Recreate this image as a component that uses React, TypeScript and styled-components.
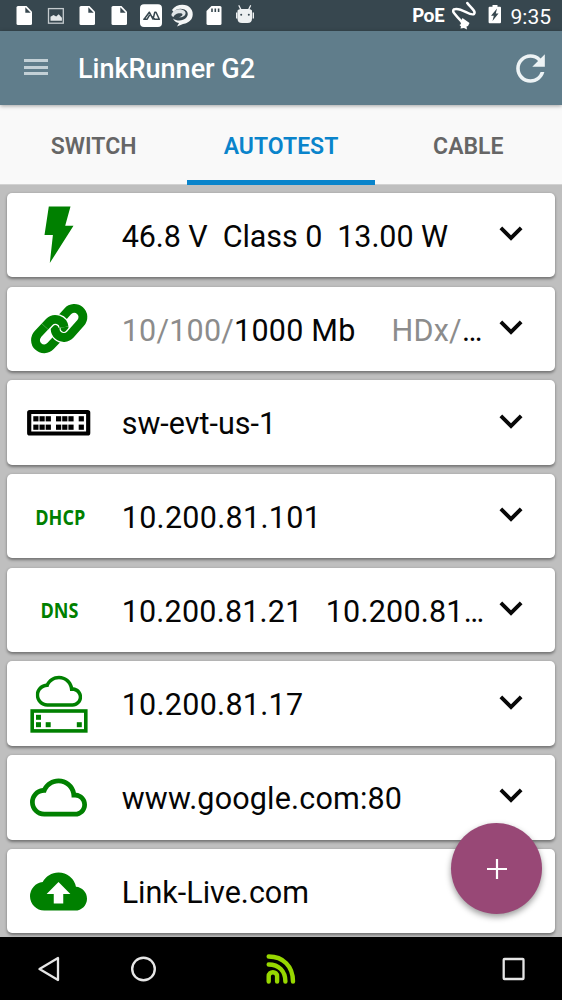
import React from "react";
import styled, { createGlobalStyle } from "styled-components";
import { MdBackup, MdCloudQueue, MdExpandMore, MdRefresh } from "react-icons/md";

const GlobalStyle = createGlobalStyle`
  *, *::before, *::after { box-sizing: border-box; }
  body { margin: 0; background: #000; font-family: Roboto, "Liberation Sans", sans-serif; }
  svg { display: block; flex: none; }
`;

const Screen = styled.div`
  position: relative;
  width: 562px;
  height: 1000px;
  display: flex;
  flex-direction: column;
  overflow: hidden;
  background: #bfbfbf;
`;

const StatusBar = styled.header`
  height: 31px;
  flex: none;
  display: flex;
  justify-content: space-between;
  background: #37474f;
  color: #fff;
`;

const Notifications = styled.div`
  display: flex;
  padding-left: 8.2px;
`;

const NotificationSlot = styled.div`
  width: 31.65px;
  display: flex;
  justify-content: center;
`;

const SystemStatus = styled.div`
  display: flex;
  align-items: flex-start;
  padding-right: 11px;
`;

const PoeLabel = styled.span`
  font: 900 19px/20px Lato, sans-serif;
  padding-top: 5px;
  margin-right: 5px;
`;

const BatterySlot = styled.span`
  margin-left: 11.5px;
`;

const Clock = styled.span`
  font-size: 21px;
  line-height: 24px;
  padding-top: 5px;
  margin-left: 9px;
`;

const AppBar = styled.div`
  position: relative;
  z-index: 1;
  height: 74px;
  flex: none;
  display: flex;
  align-items: center;
  padding: 0 10px 0 24px;
  background: #607d8b;
  box-shadow: 0 1px 4px rgba(0, 0, 0, 0.35);
  color: #fff;
`;

const MenuButton = styled.div`
  width: 24px;
  display: flex;
  flex-direction: column;
  gap: 3.3px;
  margin-top: -2px;
`;

const MenuLine = styled.span`
  height: 3px;
  background: #c3d0d6;
`;

const Title = styled.h1`
  flex: 1;
  margin: 2px 0 0 30px;
  font-size: 27px;
  line-height: 32px;
  font-weight: 500;
`;

const Tabs = styled.nav`
  height: 80px;
  flex: none;
  display: grid;
  grid-template-columns: repeat(3, 1fr);
  background: #f9f9f9;
  border-bottom: 1px solid #d2d2d2;
`;

const Tab = styled.div<{ $active?: boolean }>`
  height: 80px;
  display: flex;
  align-items: center;
  justify-content: center;
  padding-top: 8px;
  border-bottom: 5px solid ${(p) => (p.$active ? "#0a84cb" : "transparent")};
  color: ${(p) => (p.$active ? "#0a84cb" : "#666")};
  font-size: 23px;
  font-weight: 600;
`;

const CardList = styled.main`
  flex: 1;
  min-height: 0;
  display: flex;
  flex-direction: column;
  gap: 9.3px;
  padding: 8px 7px 0;
`;

const Card = styled.section`
  height: 84.4px;
  flex: none;
  display: flex;
  align-items: center;
  padding: 0 21px 0 19.5px;
  border-radius: 5px;
  background: #fff;
  box-shadow: 0 1.5px 3px rgba(0, 0, 0, 0.4);
`;

const IconCell = styled.div`
  width: 64px;
  height: 64px;
  flex: none;
  display: flex;
  align-items: center;
  justify-content: center;
  color: #008000;
`;

const Protocol = styled.span`
  font: 700 20.5px/24px "Open Sans", "Noto Sans", sans-serif;
  padding: 1px 0 0 3px;
  transform: scaleX(0.88);
`;

const Value = styled.div<{ $tracking: number }>`
  flex: 1;
  padding: 3.5px 0 0 31.2px;
  color: #050505;
  font-size: 30.5px;
  line-height: 36px;
  letter-spacing: ${(p) => p.$tracking}px;
  white-space: pre;
`;

const Muted = styled.span`
  color: #8c8c8c;
`;

const Duplex = styled.span`
  margin-left: 36px;
`;

const Chevron = styled(MdExpandMore)`
  width: 46px;
  height: 46px;
  margin: -4px 0 0 -6px;
  color: #080808;
`;

const AddButton = styled.button`
  position: absolute;
  left: 451px;
  top: 823px;
  width: 91px;
  height: 91px;
  display: grid;
  place-items: center;
  padding: 0 0 0 1px;
  border: 0;
  border-radius: 50%;
  background: #984876;
  box-shadow: 0 3px 6px rgba(0, 0, 0, 0.4);
`;

const NavBar = styled.footer`
  height: 63px;
  flex: none;
  display: flex;
  align-items: center;
  background: #000;
`;

const NavItem = styled.div<{ $width: number }>`
  width: ${(p) => p.$width}px;
  display: flex;
  justify-content: center;
`;

const FileIcon = () => (
  <svg width="24" height="31" viewBox="0 0 24 31">
    <path fill="#fff" d="M6 6h8.500l5.500 5.700V23.500q0 1.500-1.500 1.500H6q-1.500 0-1.500-1.500v-16Q4.500 6 6 6z" />
    <path fill="#37474f" d="M13.300 7.300v5.500h5.400z" />
  </svg>
);

const ImageIcon = () => (
  <svg width="24" height="31" viewBox="0 0 24 31">
    <rect x="4.500" y="8.600" width="14.800" height="14.600" fill="none" stroke="#c5cbce" strokeWidth="1.300" />
    <path fill="#e4e8e9" d="M6.500 20.700v-4l3-1.800 2.700 1.700 2.500-2.300 3.200 3.400v3z" />
  </svg>
);

const PeaksIcon = () => (
  <svg width="24" height="31" viewBox="0 0 24 31">
    <rect x="1" y="4.300" width="22" height="22.700" rx="4" fill="#fff" />
    <path
      d="M4.200 19.300H8l2.700-4.500M5.500 18.800l4.800-6.600 3.700 7 1.800-7h1.200l3.300 7h-4.800l-1.700-3"
      fill="none"
      stroke="#37474f"
      strokeWidth="1.500"
      strokeLinejoin="round"
    />
  </svg>
);

const SwirlIcon = () => (
  <svg width="24" height="31" viewBox="0 0 24 31">
    <path
      fill="#f4f6f6"
      d="M2 10C5 5 12 3.500 17 5.500s7 8 5 12.500c-2 4-6 5.500-9 6l-6 2.500 2-3.500c-3-.5-5-2-6-4.500 4 3 10 2.500 13-.5 3-3 2-7-1.500-8.500C10 7.800 6 9 3.500 12z"
    />
    <path
      fill="#dfe4e6"
      d="M1.500 14c2-4 6-5.500 10-4.500 3 .8 4.500 2.500 4 4.500-.7 2.700-4 3.500-7 3.300 2-.4 4-1.300 4-2.800 0-1.200-2-1.600-4-1.200-2.500.5-4.500 2-5 3.700-1.500-.5-2.300-1.500-2-3z"
    />
  </svg>
);

const SdCardIcon = () => (
  <svg width="24" height="31" viewBox="0 0 24 31">
    <path fill="#fff" d="M9.500 6H18q1.500 0 1.500 1.500v16Q19.500 25 18 25H6q-1.500 0-1.500-1.500V11z" />
    <path stroke="#37474f" strokeWidth="1.600" d="M10 8.500v3.500M13.300 8.500v3.500M16.600 8.500v3.500" />
  </svg>
);

const RobotIcon = () => (
  <svg width="24" height="31" viewBox="0 0 24 31">
    <path stroke="#edf0f1" strokeWidth="1.300" strokeLinecap="round" d="M6 5.800l2 4M17.500 5.800l-2 4" />
    <path fill="#edf0f1" d="M4.500 10.500q1-1.500 3-1.500h8.500q2 0 3 1.500v8q0 4.500-4.500 4.500h-5.500q-4.500 0-4.500-4.500z" />
    <path stroke="#edf0f1" strokeWidth="1.400" d="M3.700 12.500v6M20.300 12.500v6" />
    <circle cx="8.200" cy="14.800" r="1" fill="#37474f" />
    <circle cx="15.800" cy="14.800" r="1" fill="#37474f" />
  </svg>
);

const CableIcon = () => (
  <svg width="26" height="31" viewBox="0 0 26 31">
    <path
      d="M17.300 3C20 7 26.500 11 24 14 20.500 17 11 6.500 4 9.300 1 12 7 16 11 21"
      fill="none"
      stroke="#fff"
      strokeWidth="2.500"
      strokeLinecap="round"
    />
    <path fill="#fff" d="M12.500 18l7 5-1.500 3-1.500.5.500 3-3-1.500-3.500.5.500-2-1.500-1.500 1.500-1-.5-2z" />
  </svg>
);

const BatteryIcon = () => (
  <svg width="14" height="31" viewBox="0 0 14 31">
    <path fill="#fff" d="M4.500 5h5v1.800H12q1 0 1 1V22q0 1.300-1 1.300H1.600Q.6 23.300.6 22V7.800q0-1 1-1h2.900z" />
    <path fill="#37474f" d="M9 8.500L3 15.700h2.800L4.500 21l6-7.500H7.800z" />
  </svg>
);

const BoltIcon = () => (
  <svg width="64" height="64" viewBox="0 0 64 64">
    <path fill="currentColor" d="M21.800 3.500H43.500L38.200 22.800h8.300L22.800 60.100l3.100-28H17.500z" />
  </svg>
);

/* Two interlocked chain links; the white strokes leave a gap where one passes over the other. */
const LOWER_LINK = "M10.900 37.100L22.200 25.100A8.700 8.700 0 0 1 34.800 37.100L23.500 49.100A8.700 8.700 0 0 1 10.900 37.100z";
const UPPER_LINK = "M30.300 26L40.700 14.300A8.700 8.700 0 0 1 53.700 25.900L43.300 37.600A8.700 8.700 0 0 1 30.300 26z";
const OVERLAP = "M18 29.600L22.200 25.100A8.700 8.700 0 0 1 37.100 30.100";

const ChainIcon = () => (
  <svg width="64" height="64" viewBox="0 0 64 64" fill="none">
    <path d={LOWER_LINK} stroke="currentColor" strokeWidth="8.800" />
    <path d={UPPER_LINK} stroke="#fff" strokeWidth="11.400" />
    <path d={UPPER_LINK} stroke="currentColor" strokeWidth="8.800" />
    <path d={OVERLAP} stroke="#fff" strokeWidth="11.400" />
    <path d={OVERLAP} stroke="currentColor" strokeWidth="8.800" />
  </svg>
);

const PORT_X = [6.800, 13, 19.200, 29.500, 35.700, 41.900, 52.200];

const SwitchIcon = () => (
  <svg width="64" height="64" viewBox="0.5 0.3 64 64">
    <rect x="2.700" y="21.300" width="59" height="21.500" rx=".5" fill="none" stroke="#000" strokeWidth="4.200" />
    {[25.500, 33.900].map((y) =>
      PORT_X.map((x) => <rect key={`${x}-${y}`} x={x} y={y} width="5.200" height="5.200" fill="#000" />)
    )}
  </svg>
);

const ServerCloudIcon = () => (
  <svg width="64" height="64" viewBox="0 0 64 64">
    <svg x="8.700" y="-4.100" width="46.500" height="46.500" viewBox="0 0 24 24">
      <path
        fill="currentColor"
        fillRule="evenodd"
        d="M19.350 10.040C18.670 6.590 15.640 4 12 4 9.110 4 6.600 5.640 5.350 8.040 2.340 8.360 0 10.910 0 14c0 3.310 2.690 6 6 6h13c2.760 0 5-2.240 5-5 0-2.640-2.050-4.780-4.650-4.960zM19 18.200H6c-2.300 0-4.200-1.900-4.200-4.200s1.900-4.200 4.200-4.200h.6C7.300 7.400 9.400 5.800 12 5.800c3.100 0 5.700 2.500 5.700 5.700v.4H19c1.700 0 3.200 1.400 3.200 3.100S20.700 18.200 19 18.200z"
      />
    </svg>
    <rect x="5.200" y="39" width="53.600" height="19.900" fill="none" stroke="currentColor" strokeWidth="3.600" />
    <g fill="currentColor">
      <rect x="9" y="42.800" width="5" height="5" />
      <rect x="9" y="50.200" width="5" height="5" />
      <rect x="18.700" y="50.200" width="5" height="5" />
      <rect x="49.800" y="50.200" width="5" height="5" />
    </g>
  </svg>
);

const BackIcon = () => (
  <svg width="24" height="28" viewBox="0 0 24 28">
    <path d="M21 3v22L2.500 14z" fill="none" stroke="#e6e6e6" strokeWidth="2.300" strokeLinejoin="round" />
  </svg>
);

const HomeIcon = () => (
  <svg width="28" height="28" viewBox="0 0 28 28">
    <circle cx="13.500" cy="14" r="11.300" fill="none" stroke="#e6e6e6" strokeWidth="2.400" />
  </svg>
);

const SignalIcon = () => (
  <svg width="30" height="30" viewBox="0 0 30 30">
    <path
      d="M2.700 2.500C17 2.500 27 12 27 27.500M2.700 10.500c10 0 16.700 6.500 16.700 17M2.700 27.500V22.300c0-5.500 8.400-5.500 8.400 0v5.200"
      fill="none"
      stroke="#97d700"
      strokeWidth="4.400"
      strokeLinecap="round"
    />
  </svg>
);

const RecentsIcon = () => (
  <svg width="26" height="26" viewBox="0 0 26 26">
    <rect x="2.700" y="3" width="19.800" height="20" rx=".8" fill="none" stroke="#e6e6e6" strokeWidth="2.300" />
  </svg>
);

const NOTIFICATIONS = [FileIcon, ImageIcon, FileIcon, FileIcon, PeaksIcon, SwirlIcon, SdCardIcon, RobotIcon];

type Result = {
  id: string;
  icon: React.ReactNode;
  value: React.ReactNode;
  tracking: number;
  expandable: boolean;
};

const RESULTS: Result[] = [
  { id: "poe", icon: <BoltIcon />, value: "46.8 V  Class 0  13.00 W", tracking: -0.07, expandable: true },
  {
    id: "link",
    icon: <ChainIcon />,
    value: (
      <>
        <Muted>10/100/</Muted>1000 Mb
        <Duplex>
          <Muted>HDx/</Muted>…
        </Duplex>
      </>
    ),
    tracking: 0.22,
    expandable: true,
  },
  { id: "switch", icon: <SwitchIcon />, value: "sw-evt-us-1", tracking: 0, expandable: true },
  { id: "dhcp", icon: <Protocol>DHCP</Protocol>, value: "10.200.81.101", tracking: 0.3, expandable: true },
  { id: "dns", icon: <Protocol>DNS</Protocol>, value: "10.200.81.21   10.200.81…", tracking: 0.2, expandable: true },
  { id: "gateway", icon: <ServerCloudIcon />, value: "10.200.81.17", tracking: 0.28, expandable: true },
  { id: "google", icon: <MdCloudQueue size={57} />, value: "www.google.com:80", tracking: 0.18, expandable: true },
  { id: "linklive", icon: <MdBackup size={57} />, value: "Link-Live.com", tracking: 0, expandable: false },
];

export default function App() {
  return (
    <Screen>
      <GlobalStyle />
      <StatusBar>
        <Notifications>
          {NOTIFICATIONS.map((Icon, i) => (
            <NotificationSlot key={i}>
              <Icon />
            </NotificationSlot>
          ))}
        </Notifications>
        <SystemStatus>
          <PoeLabel>PoE</PoeLabel>
          <CableIcon />
          <BatterySlot>
            <BatteryIcon />
          </BatterySlot>
          <Clock>9:35</Clock>
        </SystemStatus>
      </StatusBar>
      <AppBar>
        <MenuButton>
          <MenuLine />
          <MenuLine />
          <MenuLine />
        </MenuButton>
        <Title>LinkRunner G2</Title>
        <MdRefresh size={43} color="#edf3f5" />
      </AppBar>
      <Tabs>
        <Tab>SWITCH</Tab>
        <Tab $active>AUTOTEST</Tab>
        <Tab>CABLE</Tab>
      </Tabs>
      <CardList>
        {RESULTS.map((r) => (
          <Card key={r.id}>
            <IconCell>{r.icon}</IconCell>
            <Value $tracking={r.tracking}>{r.value}</Value>
            {r.expandable && <Chevron />}
          </Card>
        ))}
      </CardList>
      <AddButton aria-label="Add">
        <svg width="22" height="22" viewBox="0 0 22 22">
          <path d="M11 1v20M1 11h20" stroke="#fff" strokeWidth="2.200" />
        </svg>
      </AddButton>
      <NavBar>
        <NavItem $width={97}>
          <BackIcon />
        </NavItem>
        <NavItem $width={93}>
          <HomeIcon />
        </NavItem>
        <NavItem $width={182}>
          <SignalIcon />
        </NavItem>
        <NavItem $width={97} />
        <NavItem $width={89}>
          <RecentsIcon />
        </NavItem>
      </NavBar>
    </Screen>
  );
}
